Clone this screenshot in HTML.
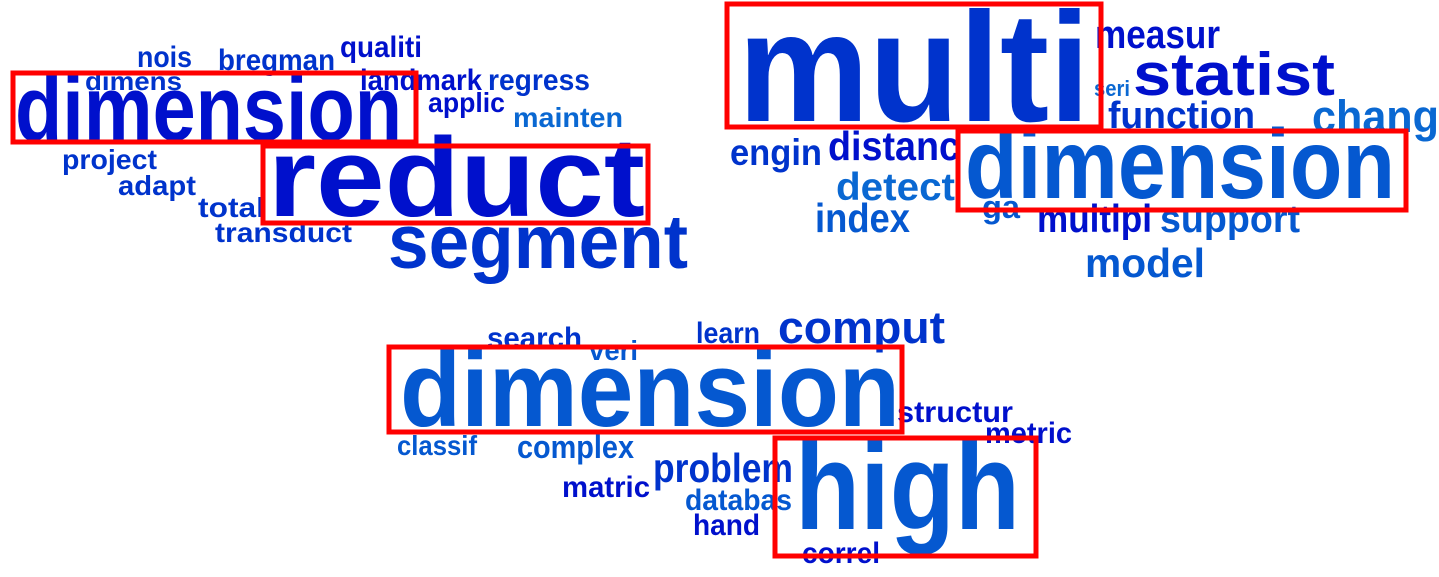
<!DOCTYPE html>
<html><head><meta charset="utf-8"><style>
html,body{margin:0;padding:0;background:#fff;width:1439px;height:577px;overflow:hidden}
svg{display:block}
text{font-family:"Liberation Sans",sans-serif;font-weight:bold}
.d{fill:#0010cc}.m{fill:#0033cc}.l{fill:#0558d0}.x{fill:#0a68d2}
</style></head><body>
<svg width="1439" height="577" viewBox="0 0 1439 577" xmlns="http://www.w3.org/2000/svg">
<g>
<text class="m" x="137" y="67" font-size="30" textLength="55" lengthAdjust="spacingAndGlyphs">nois</text>
<text class="m" x="218" y="70" font-size="30" textLength="117" lengthAdjust="spacingAndGlyphs">bregman</text>
<text class="d" x="340" y="57" font-size="30" textLength="82" lengthAdjust="spacingAndGlyphs">qualiti</text>
<text class="m" x="85" y="90" font-size="26" textLength="97" lengthAdjust="spacingAndGlyphs">dimens</text>
<text class="d" x="360" y="90" font-size="30" textLength="122" lengthAdjust="spacingAndGlyphs">landmark</text>
<text class="m" x="488" y="90" font-size="30" textLength="102" lengthAdjust="spacingAndGlyphs">regress</text>
<text class="d" x="15" y="140" font-size="92" textLength="387" lengthAdjust="spacingAndGlyphs">dimension</text>
<text class="d" x="428" y="112" font-size="28" textLength="77" lengthAdjust="spacingAndGlyphs">applic</text>
<text class="x" x="513" y="127" font-size="28" textLength="110" lengthAdjust="spacingAndGlyphs">mainten</text>
<text class="m" x="62" y="169" font-size="28" textLength="95" lengthAdjust="spacingAndGlyphs">project</text>
<text class="m" x="118" y="195" font-size="28" textLength="78" lengthAdjust="spacingAndGlyphs">adapt</text>
<text class="m" x="198" y="217" font-size="28" textLength="67" lengthAdjust="spacingAndGlyphs">total</text>
<text class="m" x="215" y="242" font-size="28" textLength="137" lengthAdjust="spacingAndGlyphs">transduct</text>
<text class="d" x="268" y="216" font-size="112" textLength="377" lengthAdjust="spacingAndGlyphs">reduct</text>
<text class="m" x="388" y="268" font-size="76" textLength="300" lengthAdjust="spacingAndGlyphs">segment</text>

<text class="m" x="738" y="121" font-size="156" textLength="352" lengthAdjust="spacingAndGlyphs">multi</text>
<text class="d" x="1095" y="48" font-size="40" textLength="125" lengthAdjust="spacingAndGlyphs">measur</text>
<text class="x" x="1094" y="96" font-size="22" textLength="36" lengthAdjust="spacingAndGlyphs">seri</text>
<text class="d" x="1133" y="95" font-size="60" textLength="202" lengthAdjust="spacingAndGlyphs">statist</text>
<text class="m" x="1108" y="128" font-size="38" textLength="147" lengthAdjust="spacingAndGlyphs">function</text>
<text class="x" x="1312" y="132" font-size="45" textLength="127" lengthAdjust="spacingAndGlyphs">chang</text>
<text class="m" x="730" y="165" font-size="37" textLength="92" lengthAdjust="spacingAndGlyphs">engin</text>
<text class="d" x="828" y="160" font-size="41" textLength="132" lengthAdjust="spacingAndGlyphs">distanc</text>
<text class="l" x="965" y="198" font-size="98" textLength="430" lengthAdjust="spacingAndGlyphs">dimension</text>
<text class="x" x="836" y="200" font-size="39" textLength="119" lengthAdjust="spacingAndGlyphs">detect</text>
<text class="l" x="815" y="232" font-size="41" textLength="95" lengthAdjust="spacingAndGlyphs">index</text>
<text class="l" x="982" y="218" font-size="32" textLength="38" lengthAdjust="spacingAndGlyphs">ga</text>
<text class="d" x="1037" y="232" font-size="39" textLength="115" lengthAdjust="spacingAndGlyphs">multipl</text>
<text class="l" x="1160" y="232" font-size="39" textLength="140" lengthAdjust="spacingAndGlyphs">support</text>
<text class="l" x="1085" y="277" font-size="41" textLength="120" lengthAdjust="spacingAndGlyphs">model</text>

<text class="m" x="487" y="348" font-size="30" textLength="95" lengthAdjust="spacingAndGlyphs">search</text>
<text class="m" x="696" y="343" font-size="30" textLength="64" lengthAdjust="spacingAndGlyphs">learn</text>
<text class="m" x="778" y="343" font-size="45" textLength="167" lengthAdjust="spacingAndGlyphs">comput</text>
<text class="l" x="589" y="360" font-size="28" textLength="49" lengthAdjust="spacingAndGlyphs">veri</text>
<text class="l" x="400" y="426" font-size="107" textLength="500" lengthAdjust="spacingAndGlyphs">dimension</text>
<text class="d" x="897" y="422" font-size="30" textLength="116" lengthAdjust="spacingAndGlyphs">structur</text>
<text class="d" x="985" y="443" font-size="30" textLength="87" lengthAdjust="spacingAndGlyphs">metric</text>
<text class="l" x="397" y="455" font-size="28" textLength="80" lengthAdjust="spacingAndGlyphs">classif</text>
<text class="l" x="517" y="458" font-size="32" textLength="117" lengthAdjust="spacingAndGlyphs">complex</text>
<text class="m" x="653" y="482" font-size="41" textLength="140" lengthAdjust="spacingAndGlyphs">problem</text>
<text class="l" x="795" y="529" font-size="123" textLength="225" lengthAdjust="spacingAndGlyphs">high</text>
<text class="d" x="562" y="497" font-size="30" textLength="88" lengthAdjust="spacingAndGlyphs">matric</text>
<text class="l" x="685" y="510" font-size="30" textLength="107" lengthAdjust="spacingAndGlyphs">databas</text>
<text class="d" x="693" y="535" font-size="30" textLength="67" lengthAdjust="spacingAndGlyphs">hand</text>
<text class="d" x="802" y="563" font-size="30" textLength="78" lengthAdjust="spacingAndGlyphs">correl</text>
</g>
<g fill="none" stroke="#ff0000" stroke-width="5">
<rect x="13" y="73" width="403" height="69"/>
<rect x="263" y="146" width="385" height="77"/>
<rect x="727" y="4" width="374" height="123"/>
<rect x="958" y="131" width="448" height="79"/>
<rect x="389" y="347" width="513" height="85"/>
<rect x="775" y="438" width="261" height="118"/>
</g>
</svg>
</body></html>
